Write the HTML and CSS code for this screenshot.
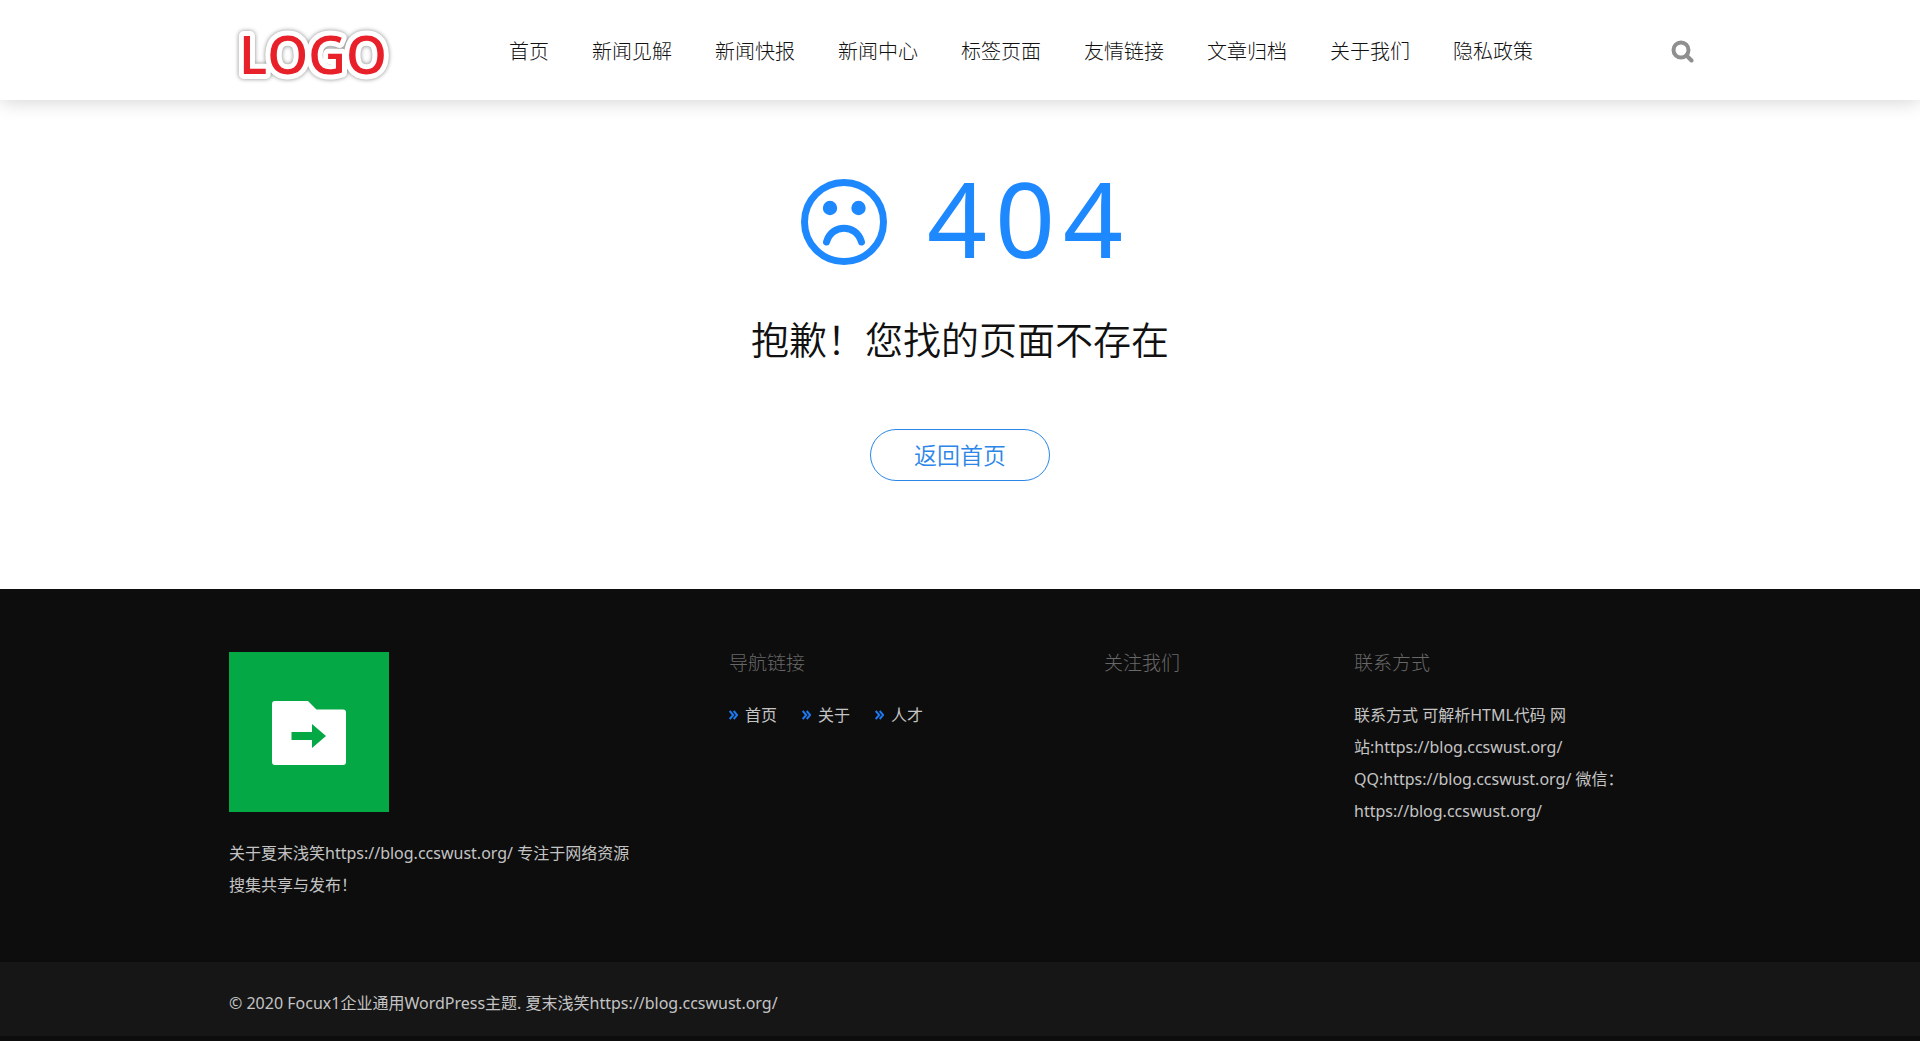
FILE: index.html
```html
<!DOCTYPE html>
<html lang="zh-CN">
<head>
<meta charset="utf-8">
<meta name="viewport" content="width=device-width, initial-scale=1">
<title>404</title>
<link rel="stylesheet" href="styles.css">
</head>
<body>
<header class="header">
  <div class="container header-inner">
    <a class="logo" href="#" aria-label="LOGO">
      <svg width="180" height="76" viewBox="0 0 180 76" aria-hidden="true">
        <text class="logo-text" x="10" y="56">LOGO</text>
      </svg>
    </a>
    <nav class="nav">
      <a href="#">首页</a>
      <a href="#">新闻见解</a>
      <a href="#">新闻快报</a>
      <a href="#">新闻中心</a>
      <a href="#">标签页面</a>
      <a href="#">友情链接</a>
      <a href="#">文章归档</a>
      <a href="#">关于我们</a>
      <a href="#">隐私政策</a>
    </nav>
    <button class="search" type="button" aria-label="搜索">
      <svg width="23" height="23" viewBox="0 0 23 23" aria-hidden="true">
        <circle cx="10" cy="10" r="7.500" fill="none" stroke="currentColor" stroke-width="4"/>
        <path d="M15.500 15.500l5 5" stroke="currentColor" stroke-width="4" stroke-linecap="round"/>
      </svg>
    </button>
  </div>
</header>
<main class="error">
  <h1 class="code">
    <svg width="86" height="86" viewBox="0 0 86 86" aria-hidden="true">
      <circle cx="43" cy="43" r="39.500" fill="none" stroke="currentColor" stroke-width="7"/>
      <circle cx="29" cy="29" r="7.200" fill="currentColor"/>
      <circle cx="57.500" cy="29" r="7.200" fill="currentColor"/>
      <path d="M25.500 63C30.500 44.500 55.500 44.500 60.500 63" fill="none" stroke="currentColor" stroke-width="7" stroke-linecap="round"/>
    </svg>
    <span class="digits">404</span>
  </h1>
  <h2 class="message">抱歉！您找的页面不存在</h2>
  <a class="home-button" href="#">返回首页</a>
</main>
<footer class="footer">
  <div class="container columns">
    <section>
      <svg class="badge" width="160" height="160" viewBox="0 0 160 160" aria-hidden="true">
        <path d="M0 0h160v160H0z" fill="#04a946"/>
        <path d="M46 49h33l8.500 8.500H114a3 3 0 0 1 3 3V110a3 3 0 0 1-3 3H46a3 3 0 0 1-3-3V52a3 3 0 0 1 3-3z" fill="#fff"/>
        <path d="M62.500 80H83v-8l14 12-14 12v-8H62.500z" fill="#04a946"/>
      </svg>
      <p class="text">关于夏末浅笑https://blog.ccswust.org/ 专注于网络资源<br>搜集共享与发布！</p>
    </section>
    <section>
      <h3 class="title">导航链接</h3>
      <ul class="links">
        <li><a href="#"><svg class="chevrons" width="9" height="10" viewBox="0 0 9 10" aria-hidden="true"><path d="M.7 1l3.500 4L.7 9M4.700 1l3.500 4-3.500 4"/></svg>首页</a></li>
        <li><a href="#"><svg class="chevrons" width="9" height="10" viewBox="0 0 9 10" aria-hidden="true"><path d="M.7 1l3.500 4L.7 9M4.700 1l3.500 4-3.500 4"/></svg>关于</a></li>
        <li><a href="#"><svg class="chevrons" width="9" height="10" viewBox="0 0 9 10" aria-hidden="true"><path d="M.7 1l3.500 4L.7 9M4.700 1l3.500 4-3.500 4"/></svg>人才</a></li>
      </ul>
    </section>
    <section>
      <h3 class="title">关注我们</h3>
    </section>
    <section>
      <h3 class="title">联系方式</h3>
      <p class="text">联系方式 可解析HTML代码 网<br>站:https://blog.ccswust.org/<br>QQ:https://blog.ccswust.org/ 微信：<br>https://blog.ccswust.org/</p>
    </section>
  </div>
  <div class="copyright">
    <p class="container text">© 2020 Focux1企业通用WordPress主题. 夏末浅笑https://blog.ccswust.org/</p>
  </div>
</footer>
</body>
</html>
```

FILE: styles.css
```css
* {
  box-sizing: border-box;
}

body {
  margin: 0;
  min-height: 100vh;
  display: flex;
  flex-direction: column;
  background: #fff;
  font-family: "Noto Sans", "Noto Sans CJK SC", sans-serif;
  font-size: 16px;
  color: #111;
}

h1, h2, h3, p, ul {
  margin: 0;
  padding: 0;
  font-weight: 400;
}

a {
  color: inherit;
  text-decoration: none;
}

.container {
  width: 100%;
  max-width: 1500px;
  margin: 0 auto;
  padding: 0 16px 0 19px;
}

.header {
  position: relative;
  background: #fff;
  box-shadow: 0 0 20px rgba(0, 0, 0, 0.2);
}

.header-inner {
  display: flex;
  align-items: center;
  min-height: 100px;
  padding-top: 3px;
}

.logo {
  display: block;
  height: 76px;
  margin-top: 8px;
}

.logo-text {
  fill: #e8202a;
  stroke: #fff;
  stroke-width: 10px;
  stroke-linejoin: round;
  paint-order: stroke;
  filter: drop-shadow(0 0 2px #888);
  font-family: "Open Sans", sans-serif;
  font-size: 52px;
  font-weight: 600;
}

.nav {
  display: flex;
  gap: 43px;
  margin-left: 100px;
  font-size: 20px;
  font-weight: 300;
  line-height: 30px;
  color: #111;
}

.search {
  display: flex;
  margin-left: auto;
  padding: 0;
  border: 0;
  background: none;
  color: #8f8f8f;
}

.error {
  display: flex;
  flex: 1;
  flex-direction: column;
  align-items: center;
  padding: 62px 20px 108px;
}

.code {
  display: flex;
  align-items: center;
  gap: 40px;
  padding-left: 12px;
  color: #1e88ff;
  font-size: 105px;
  line-height: 112px;
  letter-spacing: 8px;
}

.digits {
  padding-bottom: 8px;
}

.message {
  margin-top: 27px;
  font-size: 38px;
  font-weight: 350;
  line-height: 60px;
}

.home-button {
  margin-top: 60px;
  padding: 0 43px;
  border: 1px solid #2b86e8;
  border-radius: 26px;
  color: #2b86e8;
  font-size: 23px;
  font-weight: 350;
  line-height: 50px;
}

.footer {
  background: #0d0d0d;
  color: #c4c4c4;
  padding-bottom: 5px;
}

.columns {
  display: grid;
  grid-template-columns: 500px 375px 250px 1fr;
  padding-top: 63px;
  padding-bottom: 61px;
}

.badge {
  display: block;
  margin-bottom: 25px;
}

.text {
  font-size: 16px;
  line-height: 32px;
}

.title {
  margin-bottom: 25px;
  color: #686868;
  font-size: 19px;
  font-weight: 300;
  line-height: 22px;
}

.links {
  display: flex;
  gap: 25px;
  list-style: none;
  line-height: 32px;
}

.links a {
  display: flex;
  align-items: center;
  gap: 7px;
}

.chevrons {
  fill: none;
  stroke: #1e78f0;
  stroke-width: 2px;
}

.copyright {
  padding: 25px 0 17px;
  background: #161616;
}
```
